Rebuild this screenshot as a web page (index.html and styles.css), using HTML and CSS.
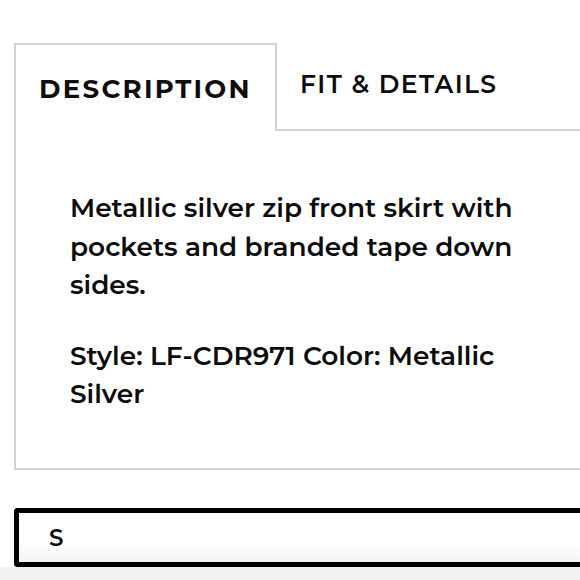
FILE: index.html
```html
<!DOCTYPE html>
<html>
<head>
<meta charset="utf-8">
<link rel="stylesheet" href="styles.css">
</head>
<body>
<div class="page">
  <div class="tabs">
    <div class="tab active">DESCRIPTION</div>
    <div class="tab">FIT &amp; DETAILS</div>
  </div>
  <div class="panel">
    <p>Metallic silver zip front skirt with pockets and branded tape down sides.</p>
    <p>Style: LF-CDR971 Color: Metallic Silver</p>
  </div>
  <div class="select">S</div>
</div>
<div class="footer"></div>
</body>
</html>
```
FILE: styles.css
```css
html, body {
  margin: 0;
  padding: 0;
  background: #fff;
  overflow: hidden;
}
body {
  width: 580px;
  height: 580px;
  font-family: "Montserrat", Inter, "Open Sans", sans-serif;
  color: #0d0d0d;
}
.page {
  padding: 43px 0 0 14px;
  width: 566px;
}
.tabs {
  display: flex;
  height: 88px;
}
.tab {
  box-sizing: border-box;
  height: 88px;
  display: flex;
}
.tab.active {
  width: 263px;
  border: 2px solid #d2d2d2;
  border-bottom: none;
  justify-content: center;
  align-items: center;
  font-size: 26px;
  letter-spacing: 2.3px;
  font-weight: 700;
  padding-top: 1px;
}
.tab:not(.active) {
  flex: 1;
  border-bottom: 2px solid #d2d2d2;
  padding-left: 23px;
  font-size: 25px;
  letter-spacing: 1.4px;
  font-weight: 600;
  align-items: flex-start;
  padding-top: 26px;
}
.panel {
  border-left: 2px solid #d2d2d2;
  border-bottom: 2px solid #d2d2d2;
  padding: 58px 20px 0 54px;
  height: 339px;
  box-sizing: border-box;
  font-size: 26.4px;
  line-height: 38.5px;
  font-weight: 600;
}
.panel p {
  margin: 0 0 32px 0;
  width: 470px;
}
.select {
  margin-top: 38px;
  box-sizing: border-box;
  height: 59px;
  border: 5px solid #000;
  border-right: none;
  border-radius: 4px 0 0 4px;
  padding-left: 30px;
  display: flex;
  align-items: center;
  font-size: 23px;
  font-weight: 600;
  background: linear-gradient(#fff 60%, #f4f4f4);
}
.footer {
  background: #f2f2f2;
  height: 20px;
}
```
